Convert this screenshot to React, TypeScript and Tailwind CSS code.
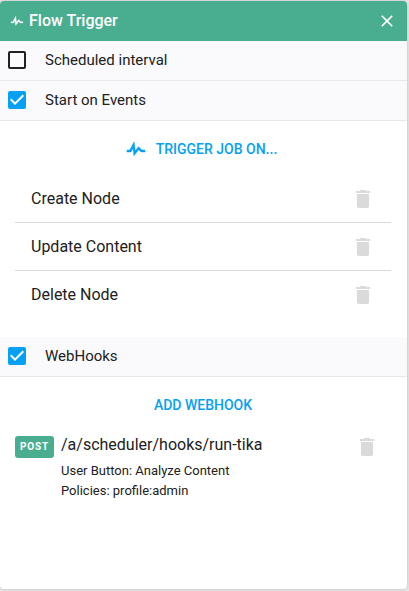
import React from 'react';

function PulseIcon({ className }: { className: string }) {
  return (
    <svg viewBox="0 0 24 24" fill="currentColor" stroke="currentColor" strokeWidth={0.45} className={className}>
      <path d="M3,13H5.79L10.1,4.79L11.28,13.75L14.5,9.66L17.83,13H21V15H17L14.67,12.67L9.92,18.73L8.94,11.31L7,15H3V13Z" />
    </svg>
  );
}

function TrashIcon() {
  return (
    <svg viewBox="0 0 24 24" className="size-6 shrink-0 fill-[#dadada]">
      <path d="M6 19c0 1.1.9 2 2 2h8c1.1 0 2-.9 2-2V7H6v12zM19 4h-3.5l-1-1h-5l-1 1H5v2h14V4z" />
    </svg>
  );
}

function CheckRow({ label, checked }: { label: string; checked: boolean }) {
  return (
    <label className="flex h-10 shrink-0 items-center border-b border-[#e6e8ec] bg-[#fafafc] pb-px pl-2">
      {checked ? (
        <span className="size-[18px] rounded-xs bg-[#059ff6]">
          <svg viewBox="3 3 18 18" className="size-[18px] fill-white">
            <path d="M10 17l-5-5 1.41-1.41L10 14.17l7.59-7.59L19 8l-9 9z" />
          </svg>
        </span>
      ) : (
        <span className="size-[18px] rounded-xs border-2 border-[#212121]" />
      )}
      <span className="ml-[19px] text-[15px] leading-5">{label}</span>
    </label>
  );
}

const events = ['Create Node', 'Update Content', 'Delete Node'];

export default function App() {
  return (
    <div className="h-[591px] w-[409px] bg-[#e9e9e9] pt-px font-['Roboto',sans-serif] text-[#212121]">
      <div className="flex h-[588px] w-[407px] flex-col overflow-hidden rounded bg-white shadow-[0_0_4px_rgba(0,0,0,0.2)]">
        <header className="flex h-10 shrink-0 items-center bg-[#49ae90] pr-[10px] pl-[9px] text-white">
          <PulseIcon className="size-4" />
          <h1 className="ml-1 flex-1 text-base font-medium">Flow Trigger</h1>
          <svg viewBox="0 0 24 24" className="size-5 fill-white">
            <path d="M19 6.41L17.59 5 12 10.59 6.41 5 5 6.41 10.59 12 5 17.59 6.41 19 12 13.41 17.59 19 19 17.59 13.41 12z" />
          </svg>
        </header>
        <CheckRow label="Scheduled interval" checked={false} />
        <CheckRow label="Start on Events" checked />
        <button className="flex h-[54px] shrink-0 items-center justify-center gap-2 pt-0.5 pr-1.5 text-sm font-medium text-[#059ff6]">
          <PulseIcon className="size-6" />
          <span>TRIGGER JOB ON...</span>
        </button>
        <ul className="mx-[15px] mr-4 h-[162px] shrink-0">
          {events.map((name) => (
            <li key={name} className="flex h-12 items-center border-b border-[#dadada] pr-4 pl-4 last:border-transparent">
              <span className="flex-1 text-base">{name}</span>
              <TrashIcon />
            </li>
          ))}
        </ul>
        <CheckRow label="WebHooks" checked />
        <button className="mt-[10px] h-9 shrink-0 pr-px text-sm font-medium text-[#059ff6]">ADD WEBHOOK</button>
        <div className="mt-[10px] flex items-start pr-7 pl-[15px]">
          <span className="mt-[3px] flex h-[22px] w-[39px] items-center justify-center rounded-[3px] bg-[#49ae90] pb-px text-[10px] font-bold tracking-[0.8px] text-white">
            POST
          </span>
          <div className="ml-[7px] flex-1">
            <div className="text-base leading-6">/a/scheduler/hooks/run-tika</div>
            <div className="mt-1 text-[13px] leading-5">User Button: Analyze Content</div>
            <div className="text-[13px] leading-5">Policies: profile:admin</div>
          </div>
          <div className="mt-[2px]">
            <TrashIcon />
          </div>
        </div>
      </div>
    </div>
  );
}
